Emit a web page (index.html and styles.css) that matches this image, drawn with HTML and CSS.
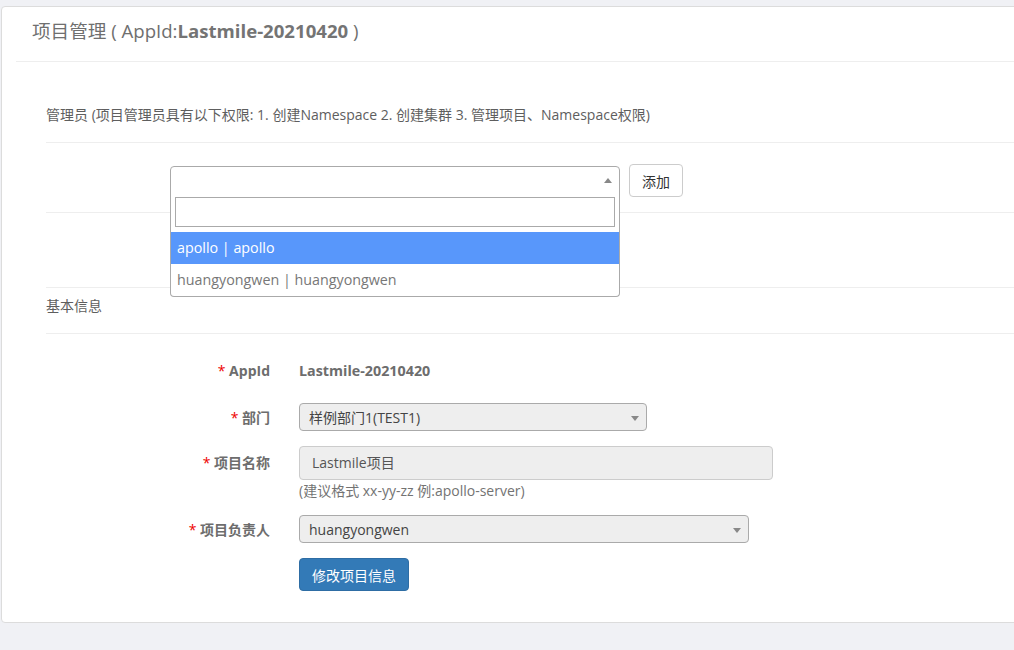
FILE: index.html
```html
<!DOCTYPE html>
<html lang="zh">
<head>
<meta charset="utf-8">
<title>项目管理</title>
<link rel="stylesheet" href="styles.css">
</head>
<body>
<div class="page">
  <div class="card">
    <div class="card-header">
      <h1 class="title">项目管理 ( AppId:<b>Lastmile-20210420</b> )</h1>
    </div>
    <div class="card-body">
      <div class="section-head">管理员 (项目管理员具有以下权限: 1. 创建Namespace 2. 创建集群 3. 管理项目、Namespace权限)</div>
      <div class="admin-row">
        <div class="s2">
          <div class="s2-box open"><span class="caret-up"></span></div>
          <div class="s2-drop">
            <div class="s2-search"><input class="s2-input" type="text"></div>
            <div class="s2-opt active">apollo | apollo</div>
            <div class="s2-opt">huangyongwen | huangyongwen</div>
          </div>
        </div>
        <button class="btn-default">添加</button>
      </div>
      <div class="admin-list"></div>
      <div class="section-head basic">基本信息</div>
      <div class="form">
        <div class="row r-appid">
          <label class="lbl"><span class="req">*</span> AppId</label>
          <div class="val strong">Lastmile-20210420</div>
        </div>
        <div class="row r-dept">
          <label class="lbl"><span class="req">*</span> 部门</label>
          <div class="select w348"><span>样例部门1(TEST1)</span><span class="caret-down"></span></div>
        </div>
        <div class="row r-name">
          <label class="lbl"><span class="req">*</span> 项目名称</label>
          <div class="field">
            <div class="input">Lastmile项目</div>
            <div class="help">(建议格式 xx-yy-zz 例:apollo-server)</div>
          </div>
        </div>
        <div class="row r-owner">
          <label class="lbl"><span class="req">*</span> 项目负责人</label>
          <div class="select w450"><span>huangyongwen</span><span class="caret-down"></span></div>
        </div>
        <div class="row r-btn">
          <span class="lbl"></span>
          <button class="btn-primary">修改项目信息</button>
        </div>
      </div>
    </div>
  </div>
</div>
</body>
</html>
```

FILE: styles.css
```css
html, body {
  margin: 0;
  padding: 0;
  background: #f0f1f5;
  overflow: hidden;
  font-family: "Open Sans", "Noto Sans CJK SC", sans-serif;
}
.page {
  width: 1014px;
  height: 650px;
  overflow: hidden;
  padding-top: 6px;
  padding-left: 1px;
  box-sizing: border-box;
}
.card {
  width: 1040px;
  height: 617px;
  box-sizing: border-box;
  background: #fff;
  border: 1px solid #dcdcdc;
  border-radius: 4px;
}
.card-header {
  margin-left: 14px;
  height: 55px;
  box-sizing: border-box;
  border-bottom: 1px solid #eee;
  padding-left: 16px;
  padding-bottom: 9px;
  display: flex;
  align-items: center;
}
.title {
  margin: 0;
  font-size: 18.6px;
  font-weight: normal;
  color: #6f6f6f;
}
.title b {
  color: #747474;
}
.card-body {
  padding-left: 44px;
}
.section-head {
  font-size: 14px;
  color: #5e5e5e;
  line-height: 20px;
  padding: 43px 0 17px 0;
  border-bottom: 1px solid #eee;
}
.section-head.basic {
  padding: 8px 0 17px 0;
}
.admin-row {
  height: 70px;
  border-bottom: 1px solid #eee;
  display: flex;
  align-items: flex-start;
  padding-left: 124px;
  box-sizing: border-box;
}
.s2 {
  position: relative;
  width: 450px;
  margin-top: 23px;
}
.s2-box {
  height: 28px;
  box-sizing: border-box;
  border: 1px solid #aaa;
  border-radius: 4px;
  background: #fff;
  position: relative;
}
.s2-box.open {
  border-radius: 4px 4px 0 0;
}
.caret-up {
  position: absolute;
  right: 7px;
  top: 11px;
  width: 0;
  height: 0;
  border-left: 4px solid transparent;
  border-right: 4px solid transparent;
  border-bottom: 5px solid #888;
}
.s2-drop {
  position: absolute;
  top: 27px;
  left: 0;
  right: 0;
  background: #fff;
  border: 1px solid #aaa;
  border-top: none;
  border-radius: 0 0 4px 4px;
  z-index: 5;
}
.s2-search {
  padding: 4px 4px 5px 4px;
}
.s2-input {
  display: block;
  width: 100%;
  height: 30px;
  box-sizing: border-box;
  border: 1px solid #aaa;
  outline: none;
  margin: 0;
}
.s2-opt {
  height: 32px;
  line-height: 32px;
  padding-left: 6px;
  font-size: 14.3px;
  color: #777;
}
.s2-opt.active {
  background: #5897fb;
  color: #fff;
}
.btn-default {
  margin-top: 21px;
  margin-left: 9px;
  height: 33px;
  width: 54px;
  padding: 0;
  background: #fff;
  border: 1px solid #ccc;
  border-radius: 4px;
  font-family: inherit;
  font-size: 14px;
  color: #333;
}
.admin-list {
  height: 74px;
  border-bottom: 1px solid #eee;
}
.form {
  padding-top: 21px;
}
.row {
  display: flex;
  align-items: center;
}
.lbl {
  width: 224px;
  flex: none;
  text-align: right;
  font-size: 14px;
  font-weight: bold;
  color: #6d6d6d;
  margin-right: 29px;
}
.req {
  color: #e00;
  font-weight: normal;
}
.val.strong {
  font-size: 14.3px;
  font-weight: bold;
  color: #6d6d6d;
}
.r-appid {
  height: 30px;
}
.r-dept {
  margin-top: 18px;
}
.select {
  height: 28px;
  box-sizing: border-box;
  background: #eee;
  border: 1px solid #aaa;
  border-radius: 4px;
  font-size: 14px;
  color: #444;
  padding-left: 9px;
  display: flex;
  align-items: center;
  position: relative;
}
.w348 { width: 348px; }
.w450 { width: 450px; }
.caret-down {
  position: absolute;
  right: 7px;
  top: 12px;
  width: 0;
  height: 0;
  border-left: 4px solid transparent;
  border-right: 4px solid transparent;
  border-top: 5px solid #888;
}
.r-name {
  margin-top: 15px;
  align-items: flex-start;
}
.r-name .lbl {
  line-height: 34px;
}
.input {
  width: 474px;
  height: 34px;
  box-sizing: border-box;
  background: #eee;
  border: 1px solid #ccc;
  border-radius: 4px;
  padding-left: 12px;
  font-size: 14px;
  color: #555;
  line-height: 32px;
}
.help {
  margin-top: 1px;
  font-size: 14px;
  line-height: 20px;
  color: #737373;
}
.r-owner {
  margin-top: 14px;
}
.r-btn {
  margin-top: 15px;
}
.btn-primary {
  height: 33px;
  width: 110px;
  padding: 0;
  background: #337ab7;
  border: 1px solid #2e6da4;
  border-radius: 4px;
  color: #fff;
  font-family: inherit;
  font-size: 14px;
}
```
